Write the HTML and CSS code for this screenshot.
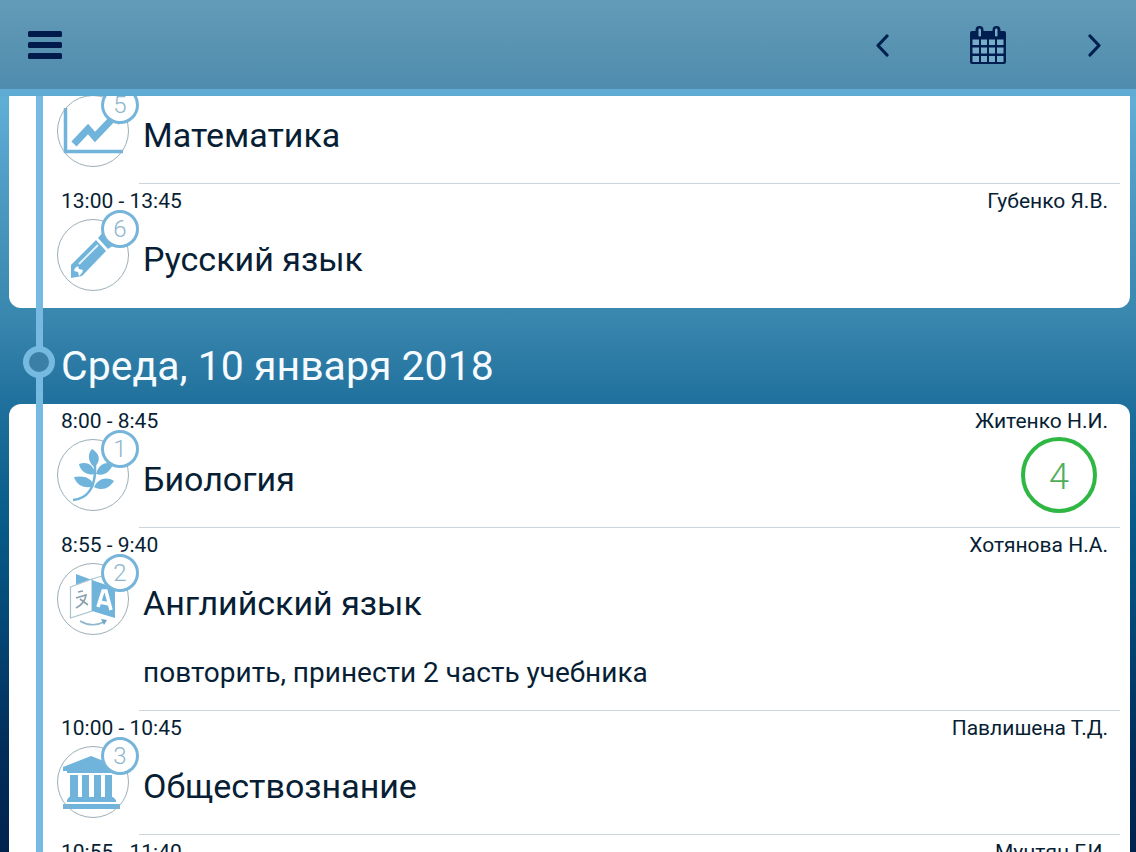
FILE: index.html
```html
<!DOCTYPE html>
<html lang="ru">
<head>
<meta charset="utf-8">
<meta name="viewport" content="width=device-width, initial-scale=1">
<title>Дневник</title>
<link rel="stylesheet" href="styles.css">
</head>
<body>
<header class="topbar">
  <button class="icon-button" type="button" aria-label="Меню">
    <svg width="36" height="30" viewBox="0 0 36 30"><g fill="#001b4b"><rect x="1" y="1" width="34" height="6" rx="1.5"/><rect x="1" y="12" width="34" height="6" rx="1.5"/><rect x="1" y="23" width="34" height="6" rx="1.5"/></g></svg>
  </button>
  <nav class="date-nav" aria-label="Выбор даты">
    <button class="icon-button" type="button" aria-label="Назад">
      <svg width="16" height="24" viewBox="0 0 16 24"><path d="M13 3 4 12.500 13 22" fill="none" stroke="#00204f" stroke-width="3.200" stroke-linecap="round" stroke-linejoin="round"/></svg>
    </button>
    <button class="icon-button" type="button" aria-label="Календарь">
      <svg width="38" height="40" viewBox="0 0 38 40"><path d="M3 6h3.500V5a4 4 0 0 1 8 0v1h9V5a4 4 0 0 1 8 0v1H35a2 2 0 0 1 2 2v29a2 2 0 0 1-2 2H3a2 2 0 0 1-2-2V8a2 2 0 0 1 2-2Z" fill="#001f50"/><g fill="#78adc9"><rect x="9.500" y="3.500" width="2.500" height="8" rx="1.200"/><rect x="26" y="3.500" width="2.500" height="8" rx="1.200"/><path d="M3.500 14.500h6.500v5.500H3.500zM12 14.500h6v5.500h-6zM20 14.500h6v5.500h-6zM28 14.500h6.500v5.500H28zM3.500 22.500h6.500v6H3.500zM12 22.500h6v6h-6zM20 22.500h6v6h-6zM28 22.500h6.500v6H28zM3.500 31h6.500v6H3.500zM12 31h6v6h-6zM20 31h6v6h-6zM28 31h6.500v6H28z"/></g></svg>
    </button>
    <button class="icon-button" type="button" aria-label="Вперёд">
      <svg width="16" height="24" viewBox="0 0 16 24"><path d="M4 3 13 12.500 4 22" fill="none" stroke="#00204f" stroke-width="3.200" stroke-linecap="round" stroke-linejoin="round"/></svg>
    </button>
  </nav>
</header>

<main class="feed">
  <div class="timeline">
    <ul class="card card-scrolled">
      <li class="lesson">
        <div class="meta"></div>
        <div class="body">
          <div class="subject-icon">
            <svg width="72" height="72" viewBox="0 0 72 72"><path d="M8.500 13v43.500H66" fill="none" stroke="#70b4dc" stroke-width="3.500"/><path d="M17 49 31 34l7 8 20-21" fill="none" stroke="#70b4dc" stroke-width="7"/><path d="M49 17 63 16 62 30Z" fill="#70b4dc"/></svg>
            <span class="badge">5</span>
          </div>
          <h3 class="subject">Математика</h3>
        </div>
      </li>
      <li class="lesson">
        <div class="meta"><time>13:00 - 13:45</time><span>Губенко Я.В.</span></div>
        <div class="body">
          <div class="subject-icon">
            <svg width="72" height="72" viewBox="0 0 72 72"><path d="M14 46 39 21 49 32 25 57 14 59Z" fill="#70b4dc"/><path d="M41 19 48 11 60 24 51 30Z" fill="#70b4dc"/><path d="M22 45 41 26" stroke="#e5f3fb" stroke-width="1.800" fill="none"/><path d="m18 49 3-2 1 3 4 1-1 3-3 3-1-4-4-1Z" fill="#fff"/></svg>
            <span class="badge">6</span>
          </div>
          <h3 class="subject">Русский язык</h3>
        </div>
      </li>
    </ul>

    <h2 class="day"><span class="day-dot"></span><span class="day-name">Среда, 10 января 2018</span></h2>

    <ul class="card">
      <li class="lesson">
        <div class="meta"><time>8:00 - 8:45</time><span>Житенко Н.И.</span></div>
        <div class="body">
          <div class="subject-icon">
            <svg width="72" height="72" viewBox="0 0 72 72"><path d="M16 61C30 60 38 49 38 31V22" fill="none" stroke="#70b4dc" stroke-width="2.500"/><g fill="#70b4dc"><path d="M37 28C30 22 31 14 35 10C42 14 45 22 37 28Z"/><path d="M38 35C29 37 23 31 22 25C31 22 37 27 38 35Z"/><path d="M39 35C48 38 54 31 56 25C47 22 41 27 39 35Z"/><path d="M37 47C27 51 19 45 17 38C27 36 35 39 37 47Z"/><path d="M37 48C46 53 53 48 57 42C49 37 41 40 37 48Z"/></g></svg>
            <span class="badge">1</span>
          </div>
          <h3 class="subject">Биология</h3>
          <span class="mark">4</span>
        </div>
      </li>
      <li class="lesson">
        <div class="meta"><time>8:55 - 9:40</time><span>Хотянова Н.А.</span></div>
        <div class="body">
          <div class="subject-icon">
            <svg width="72" height="72" viewBox="0 0 72 72"><path d="M19 11 35 17 27 19 19 22Z" fill="#70b4dc"/><path d="M13.500 24 35 16V48L13.500 55Z" fill="#fff" stroke="#a8c2d0" stroke-width="1.200"/><path d="M35 17 58 25V55L35 48Z" fill="#70b4dc"/><path d="M35 16 45 13" stroke="#a8c2d0" fill="none"/><path d="M21 29 26 28M19 35 29 32C28 38 25 42 19 45M23 36 31 42" fill="none" stroke="#8b9fac" stroke-width="1.600"/><path d="M41 44 46 28 49 28 54 47M43 39 52 41" stroke="#fff" stroke-width="3.500" fill="none"/><path d="M23 58Q35 65 47 59" fill="none" stroke="#8fb7cd" stroke-width="1.500"/><path d="m44 56 6 1-3 5Z" fill="#70a5c5"/></svg>
            <span class="badge">2</span>
          </div>
          <h3 class="subject">Английский язык</h3>
        </div>
        <p class="note">повторить, принести 2 часть учебника</p>
      </li>
      <li class="lesson">
        <div class="meta"><time>10:00 - 10:45</time><span>Павлишена Т.Д.</span></div>
        <div class="body">
          <div class="subject-icon">
            <svg width="72" height="72" viewBox="0 0 72 72"><path d="M6 21 34 10 62 21V25H57V27H10V25H6ZM13 29h8v22h-8zM25 29h7v22h-7zM37 29h7v22h-7zM48 29h7v22h-7zM12 51h44l3 3v2H10v-2zM6 58h57v5H6z" fill="#70b4dc"/></svg>
            <span class="badge">3</span>
          </div>
          <h3 class="subject">Обществознание</h3>
        </div>
      </li>
      <li class="lesson">
        <div class="meta"><time>10:55 - 11:40</time><span>Мунтян Г.И.</span></div>
      </li>
    </ul>
  </div>
</main>
</body>
</html>
```
FILE: styles.css
```css
* {
  box-sizing: border-box;
}

body {
  margin: 0;
  height: 100vh;
  display: flex;
  flex-direction: column;
  overflow: hidden;
  font-family: Roboto, "Noto Sans", sans-serif;
  color: #071e35;
  background: linear-gradient(#68afd4 0, #5faed6 12%, #4b98c1 24%, #3885ae 38%, #20719d 47%, #065a88 62%, #044674 74%, #022d5a 88%, #00234e 100%);
}

.topbar {
  flex: none;
  display: flex;
  justify-content: space-between;
  align-items: center;
  height: 96px;
  padding: 0 34px 0 27px;
  background: linear-gradient(#639bb7, #4f8cae);
  border-bottom: 7px solid #60abd3;
}

.icon-button {
  display: flex;
  padding: 0;
  border: 0;
  background: none;
}

.date-nav {
  display: flex;
  align-items: center;
  gap: 79px;
}

.feed {
  flex: 1;
  min-height: 0;
  overflow: hidden;
}

.timeline {
  position: relative;
}

.timeline::after {
  content: "";
  position: absolute;
  top: 0;
  bottom: 0;
  left: 36px;
  width: 7px;
  background: #76bae1;
}

.card {
  margin: 0 6px 0 9px;
  padding: 0 0 1px;
  list-style: none;
  background: #fefffe;
  border-radius: 12px;
}

.card-scrolled {
  margin-top: -36px;
}

.lesson {
  padding-left: 48px;
}

.lesson:not(:last-child)::after {
  content: "";
  display: block;
  height: 1px;
  margin: 0 10px 0 82px;
  background: #ccd5da;
}

.meta {
  display: flex;
  justify-content: space-between;
  height: 35px;
  padding: 4px 22px 0 4px;
  font-size: 21px;
  line-height: 26px;
}

.body {
  display: flex;
  align-items: center;
  gap: 14px;
  padding: 0 33px 16px 0;
}

.subject-icon {
  position: relative;
  flex: none;
  width: 72px;
  height: 72px;
}

.subject-icon::before {
  content: "";
  position: absolute;
  inset: 0;
  border: 1px solid #9dafb9;
  border-radius: 50%;
}

.subject-icon svg {
  display: block;
}

.badge {
  position: absolute;
  top: -9px;
  right: -10px;
  width: 38px;
  height: 38px;
  border: 3px solid #76b5d9;
  border-radius: 50%;
  background: #fefffe;
  color: #8fb5cd;
  font-size: 24px;
  font-weight: 300;
  line-height: 32px;
  text-align: center;
}

.subject {
  margin: 0;
  padding-top: 8px;
  font-size: 34px;
  font-weight: 400;
  line-height: 42px;
}

.mark {
  flex: none;
  width: 76px;
  height: 76px;
  margin: -2px 0 -2px auto;
  padding-top: 2px;
  border: 4px solid #2fb743;
  border-radius: 50%;
  color: #4fae57;
  font-size: 36px;
  font-weight: 300;
  line-height: 68px;
  text-align: center;
}

.note {
  margin: 4px 22px 19px 86px;
  font-size: 28px;
  line-height: 36px;
}

.day {
  display: flex;
  align-items: center;
  gap: 6px;
  height: 96px;
  margin: 0;
  padding: 12px 23px 0;
  color: #f5fbff;
  font-size: 41px;
  font-weight: 400;
  line-height: 50px;
}

.day-name {
  padding-top: 8px;
}

.day-dot {
  position: relative;
  z-index: 1;
  flex: none;
  width: 32px;
  height: 32px;
  border: 6px solid #76bae1;
  border-radius: 50%;
  background: #3b7ea6;
}
```
